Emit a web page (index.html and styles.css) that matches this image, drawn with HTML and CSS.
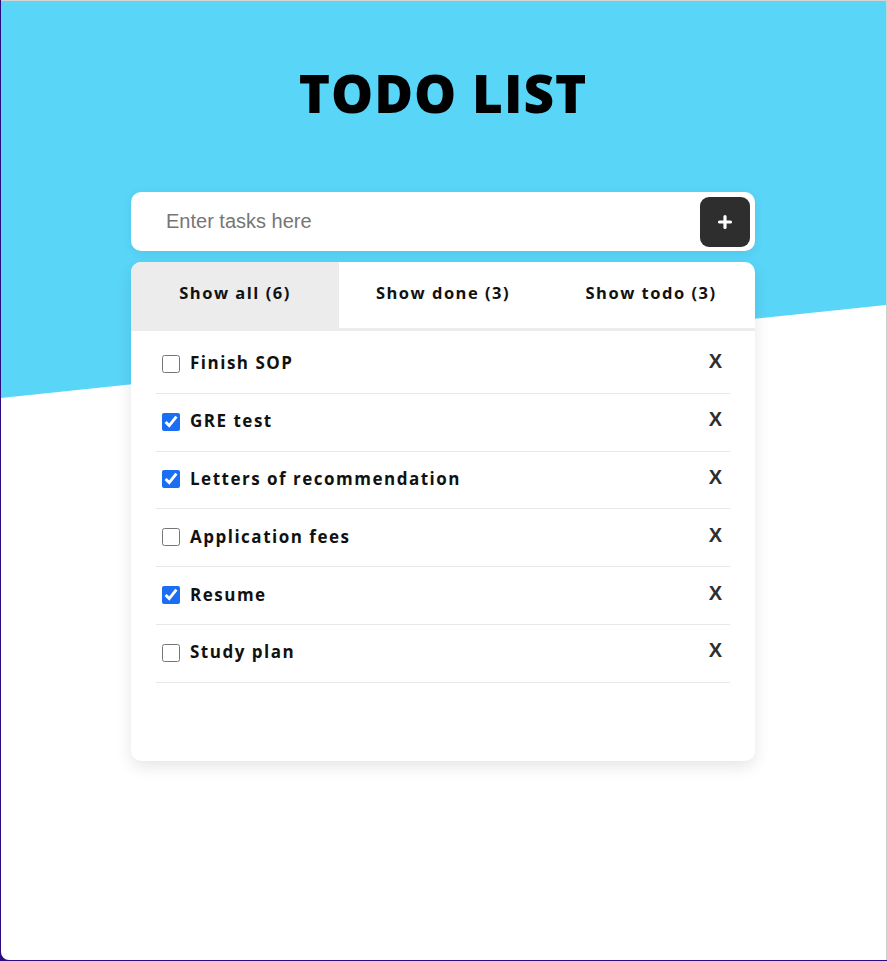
FILE: index.html
```html
<!DOCTYPE html>
<html lang="en">
<head>
<meta charset="utf-8">
<title>Todo List</title>
<link rel="stylesheet" href="styles.css">
</head>
<body>
<div class="frame">
  <main class="app">
    <h1 class="title">TODO LIST</h1>
    <form class="entry">
      <input class="entry-input" type="text" placeholder="Enter tasks here">
      <button class="entry-add" type="button" aria-label="Add">
        <svg width="16" height="16" viewBox="0 0 16 16"><path d="M8 2.5v11M2.5 8h11" stroke="#fff" stroke-width="3.2" stroke-linecap="round"/></svg>
      </button>
    </form>
    <section class="board">
      <nav class="tabs">
        <div class="tab active">Show all (6)</div>
        <div class="tab">Show done (3)</div>
        <div class="tab">Show todo (3)</div>
      </nav>
      <ul class="list">
        <li class="item"><label class="item-label"><input type="checkbox" class="check"><span>Finish SOP</span></label><span class="del">X</span></li>
        <li class="item"><label class="item-label"><input type="checkbox" class="check" checked><span>GRE test</span></label><span class="del">X</span></li>
        <li class="item"><label class="item-label"><input type="checkbox" class="check" checked><span>Letters of recommendation</span></label><span class="del">X</span></li>
        <li class="item"><label class="item-label"><input type="checkbox" class="check"><span>Application fees</span></label><span class="del">X</span></li>
        <li class="item"><label class="item-label"><input type="checkbox" class="check" checked><span>Resume</span></label><span class="del">X</span></li>
        <li class="item"><label class="item-label"><input type="checkbox" class="check"><span>Study plan</span></label><span class="del">X</span></li>
      </ul>
    </section>
  </main>
</div>
</body>
</html>
```
FILE: styles.css
```css
html {
  background: #2c0a80;
  height: 100%;
}
body {
  margin: 0;
  height: 100%;
  font-family: "Open Sans", "DejaVu Sans", sans-serif;
}
.frame {
  position: relative;
  box-sizing: border-box;
  margin-left: 1px;
  height: 960px;
  padding-right: 1px;
  background: #fff;
  border-top: 1px solid #d4d4d4;
  border-right: 1px solid #cfcfcf;
  border-bottom-left-radius: 8px;
  overflow: hidden;
}
.frame::before {
  content: "";
  position: absolute;
  left: 0;
  top: 0;
  width: 100%;
  height: 400px;
  background: #59d5f8;
  clip-path: polygon(0 0, 100% 0, 100% 304px, 0 397px);
}
.app {
  position: relative;
  width: 624px;
  margin: 0 auto;
  padding-top: 56px;
}
.title {
  margin: 0;
  text-align: center;
  font-size: 53px;
  line-height: 72px;
  font-weight: 800;
  letter-spacing: 1px;
  color: #000;
}
.entry {
  margin-top: 63px;
  height: 59px;
  background: #fff;
  border-radius: 10px;
  display: flex;
  align-items: center;
  padding: 0 5px 0 35px;
  box-shadow: 0 2px 10px rgba(0, 0, 0, 0.08);
}
.entry-input {
  flex: 1;
  border: none;
  outline: none;
  background: transparent;
  font-family: "Liberation Sans", Arial, sans-serif;
  font-size: 20px;
  color: #333;
  padding: 0;
}
.entry-input::placeholder {
  color: #767676;
}
.entry-add {
  width: 50px;
  height: 50px;
  border: none;
  border-radius: 9px;
  background: #2e2e2e;
  display: flex;
  align-items: center;
  justify-content: center;
  padding: 0;
}
.board {
  margin-top: 11px;
  height: 499px;
  background: #fff;
  border-radius: 10px;
  overflow: hidden;
  box-shadow: 0 6px 16px rgba(0, 0, 0, 0.1);
}
.tabs {
  display: grid;
  grid-template-columns: 208px 208px 208px;
  height: 66px;
  border-bottom: 3px solid #ececec;
}
.tab {
  display: flex;
  align-items: center;
  justify-content: center;
  padding-bottom: 5px;
  box-sizing: border-box;
  font-size: 16.5px;
  font-weight: 700;
  letter-spacing: 1.5px;
  color: #111;
}
.tab.active {
  background: #ececec;
}
.list {
  list-style: none;
  margin: 0;
  padding: 5px 25px 0;
}
.item {
  box-sizing: border-box;
  height: 57.8px;
  border-bottom: 1px solid #e8e8e8;
  display: flex;
  align-items: center;
  justify-content: space-between;
  padding: 0 8px 0 6px;
}
.item-label {
  display: flex;
  align-items: center;
  gap: 10px;
  font-size: 17px;
  font-weight: 700;
  letter-spacing: 1.5px;
  color: #111;
  margin-top: -3px;
}
.check {
  width: 18px;
  height: 18px;
  margin: 2px 0 0;
  accent-color: #1a6ef4;
}
.del {
  font-family: "Liberation Sans", Arial, sans-serif;
  font-size: 20px;
  font-weight: 700;
  color: #2e2e2e;
  margin-top: -5px;
}
```
